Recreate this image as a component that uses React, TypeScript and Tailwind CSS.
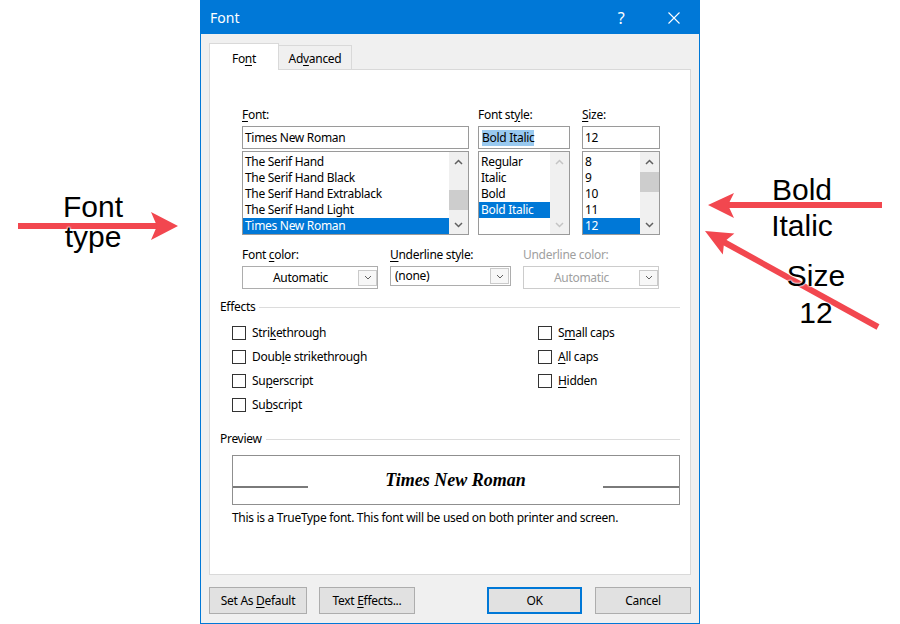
import React from 'react';

function M({ children }: { children: React.ReactNode }) {
  return <span className="underline underline-offset-2">{children}</span>;
}

function Chevron({ up, color }: { up?: boolean; color: string }) {
  return (
    <svg width="9" height="6" viewBox="0 0 9 6">
      <polyline
        points={up ? '1,5 4.5,1.5 8,5' : '1,1 4.5,4.5 8,1'}
        fill="none"
        stroke={color}
        strokeWidth="1.5"
      />
    </svg>
  );
}

function Scrollbar({ thumb, disabled }: { thumb?: string; disabled?: boolean }) {
  const c = disabled ? '#c4c4c4' : '#606060';
  return (
    <div className="w-[19px] bg-[#f0f0f0] flex flex-col">
      <div className="h-[19px] flex items-center justify-center">
        <Chevron up color={c} />
      </div>
      <div className="flex-1 flex flex-col">
        {thumb && <div className={`h-[20px] bg-[#cdcdcd] ${thumb}`} />}
      </div>
      <div className="h-[19px] flex items-center justify-center">
        <Chevron color={c} />
      </div>
    </div>
  );
}

function ListBox({ items, selected, thumb, disabled }: any) {
  return (
    <div className="mt-[2px] h-[84px] border border-[#9a9a9a] bg-white flex">
      <div className="flex-1 pt-[2px]">
        {items.map((it: string) => (
          <div
            key={it}
            className={`h-[16px] leading-[16px] pl-[2px] whitespace-nowrap ${it === selected ? 'bg-[#0078d7] text-white' : ''}`}
          >
            {it}
          </div>
        ))}
      </div>
      <Scrollbar thumb={thumb} disabled={disabled} />
    </div>
  );
}

function ComboArrow() {
  return (
    <div className="w-[19px] h-[16px] border border-[#cacaca] bg-[#f7f7f7] flex items-center justify-center">
      <svg width="8" height="5" viewBox="0 0 8 5">
        <polyline points="1,1 4,4 7,1" fill="none" stroke="#606060" strokeWidth="1" />
      </svg>
    </div>
  );
}

function Check({ children }: { children: React.ReactNode }) {
  return (
    <div className="h-[24px] flex items-center">
      <div className="w-[14px] h-[14px] border border-[#333] bg-white" />
      <span className="ml-[6px]">{children}</span>
    </div>
  );
}

function Btn({ className, primary, children }: any) {
  return (
    <div
      className={`h-[27px] flex items-center justify-center bg-[#e1e1e1] border ${primary ? 'border-[#0078d7] shadow-[inset_0_0_0_1px_#0078d7]' : 'border-[#adadad]'} ${className}`}
    >
      <span>{children}</span>
    </div>
  );
}

function Dialog() {
  return (
    <div className="relative flex flex-col w-[500px] h-[624px] border border-[#0078d7] bg-[#f0f0f0] text-[12px] leading-[16px] tracking-[-0.3px] text-black font-['Noto_Sans',sans-serif]">
      {/* Title bar */}
      <div className="flex items-center h-[33px] bg-[#0078d7] text-white pl-[9px]">
        <span className="text-[14px] leading-[20px] tracking-normal">Font</span>
        <span className="ml-auto w-[12px] text-center text-[16px] leading-[20px]">?</span>
        <svg className="ml-[41px] mr-[19px]" width="12" height="12" viewBox="0 0 12 12">
          <path d="M0.5 0.5 L11.5 11.5 M11.5 0.5 L0.5 11.5" stroke="#fff" strokeWidth="1.1" />
        </svg>
      </div>

      {/* Tabs */}
      <div className="flex items-end h-[26px] mt-[9px] mx-[8px]">
        <div className="relative z-10 -mb-px h-[27px] w-[70px] bg-white border border-b-0 border-[#d9d9d9] flex justify-center pt-[7px]">
          <span>
            Fo<M>n</M>t
          </span>
        </div>
        <div className="h-[24px] w-[73px] border border-l-0 border-b-0 border-[#d9d9d9] flex justify-center pt-[5px]">
          <span>
            Ad<M>v</M>anced
          </span>
        </div>
      </div>

      {/* Panel */}
      <div className="mx-[8px] h-[506px] bg-white border border-[#d9d9d9] flex flex-col">
        <div className="flex pt-[37px] pl-[32px]">
          <div className="w-[227px] flex flex-col">
            <span>
              <M>F</M>ont:
            </span>
            <div className="mt-[3px] h-[23px] border border-[#9a9a9a] flex items-center pl-[2px]">Times New Roman</div>
            <ListBox
              items={['The Serif Hand', 'The Serif Hand Black', 'The Serif Hand Extrablack', 'The Serif Hand Light', 'Times New Roman']}
              selected="Times New Roman"
              thumb="mt-[19px]"
            />
          </div>
          <div className="ml-[9px] w-[92px] flex flex-col">
            <span>
              Font st<M>y</M>le:
            </span>
            <div className="mt-[3px] h-[23px] border border-[#9a9a9a] flex items-center pl-[3px]">
              <span className="bg-[#99c9ef]">Bold Italic</span>
            </div>
            <ListBox items={['Regular', 'Italic', 'Bold', 'Bold Italic']} selected="Bold Italic" disabled />
          </div>
          <div className="ml-[12px] w-[78px] flex flex-col">
            <span>
              <M>S</M>ize:
            </span>
            <div className="mt-[3px] h-[23px] border border-[#9a9a9a] flex items-center pl-[2px]">12</div>
            <ListBox items={['8', '9', '10', '11', '12']} selected="12" thumb="mt-px" />
          </div>
        </div>

        <div className="flex items-start mt-[12px] pl-[32px]">
          <div className="w-[136px] flex flex-col">
            <span>
              Font <M>c</M>olor:
            </span>
            <div className="mt-[3px] h-[23px] border border-[#adadad] bg-white flex items-center">
              <span className="flex-1 text-center">Automatic</span>
              <ComboArrow />
            </div>
          </div>
          <div className="ml-[12px] w-[121px] flex flex-col">
            <span>
              <M>U</M>nderline style:
            </span>
            <div className="mt-[3px] h-[20px] border border-[#adadad] bg-white flex items-center pr-px">
              <span className="flex-1 pl-[4px]">(none)</span>
              <ComboArrow />
            </div>
          </div>
          <div className="ml-[12px] w-[136px] flex flex-col text-[#a0a0a0]">
            <span>Underline color:</span>
            <div className="mt-[3px] h-[23px] border border-[#cccccc] bg-white flex items-center">
              <span className="flex-1 text-center">Automatic</span>
              <ComboArrow />
            </div>
          </div>
        </div>

        {/* Effects */}
        <div className="flex items-center mt-[10px] pl-[10px] pr-[10px]">
          <span>Effects</span>
          <div className="flex-1 ml-[4px] mt-px h-px bg-[#dcdcdc]" />
        </div>
        <div className="flex mt-[6px] pl-[22px]">
          <div className="w-[306px] flex flex-col">
            <Check>
              Stri<M>k</M>ethrough
            </Check>
            <Check>
              Doub<M>l</M>e strikethrough
            </Check>
            <Check>
              Su<M>p</M>erscript
            </Check>
            <Check>
              Su<M>b</M>script
            </Check>
          </div>
          <div className="flex flex-col">
            <Check>
              S<M>m</M>all caps
            </Check>
            <Check>
              <M>A</M>ll caps
            </Check>
            <Check>
              <M>H</M>idden
            </Check>
          </div>
        </div>

        {/* Preview */}
        <div className="flex items-center mt-[14px] pl-[10px] pr-[10px]">
          <span>Preview</span>
          <div className="flex-1 ml-[4px] h-px bg-[#dcdcdc]" />
        </div>
        <div className="mt-[8px] ml-[22px] mr-[10px] h-[50px] border border-[#8f8f8f] flex items-start">
          <div className="mt-[30px] w-[75px] h-[2px] bg-[#7a7a7a]" />
          <div className="flex-1 mt-[14px] text-center font-['Liberation_Serif',serif] font-bold italic text-[18px] leading-[20px] tracking-normal">
            Times New Roman
          </div>
          <div className="mt-[30px] w-[76px] h-[2px] bg-[#7a7a7a]" />
        </div>
        <div className="mt-[5px] ml-[22px]">This is a TrueType font. This font will be used on both printer and screen.</div>
      </div>

      {/* Buttons */}
      <div className="flex mx-[8px] mt-[12px]">
        <Btn className="w-[98px]">
          Set As <M>D</M>efault
        </Btn>
        <Btn className="w-[96px] ml-[12px]">
          Text <M>E</M>ffects...
        </Btn>
        <Btn className="w-[95px] ml-auto" primary>
          OK
        </Btn>
        <Btn className="w-[96px] ml-[13px]">Cancel</Btn>
      </div>
    </div>
  );
}

const halo = '[text-shadow:0_0_2px_#fff,0_0_2px_#fff,0_0_2px_#fff]';

export default function App() {
  const red = '#f2474f';
  return (
    <div className="relative flex w-[900px] h-[624px] bg-white overflow-hidden">
      <svg className="absolute inset-0" width="900" height="624" viewBox="0 0 900 624">
        {/* Font type arrow */}
        <line x1="18" y1="226" x2="160" y2="226" stroke={red} strokeWidth="6" />
        <polygon points="178,226 151,212 157,226 151,240" fill={red} />
        {/* Bold Italic arrow */}
        <line x1="882" y1="205" x2="726" y2="205" stroke={red} strokeWidth="6" />
        <polygon points="708,205 734,193 728,205 734,218" fill={red} />
        {/* Size arrow */}
        <line x1="878" y1="327" x2="722" y2="241" stroke={red} strokeWidth="6" />
        <polygon points="705,231 734.4,233.6 724.2,241.7 722.8,254.6" fill={red} />
      </svg>

      <div className={`relative w-[200px] pt-[192px] font-['Liberation_Sans',Arial,sans-serif] text-[30px] leading-[30px] text-black ${halo}`}>
        <div className="ml-[61px] w-[64px] text-center">Font</div>
        <div className="ml-[61px] w-[64px] text-center">type</div>
      </div>

      <Dialog />

      <div className={`relative w-[200px] font-['Liberation_Sans',Arial,sans-serif] text-[30px] text-black ${halo}`}>
        <div className="mt-[172px] pl-[4px] text-center leading-[36px]">
          <div>Bold</div>
          <div>Italic</div>
        </div>
        <div className="mt-[13px] pl-[32px] text-center leading-[37px]">
          <div>Size</div>
          <div>12</div>
        </div>
      </div>
    </div>
  );
}
